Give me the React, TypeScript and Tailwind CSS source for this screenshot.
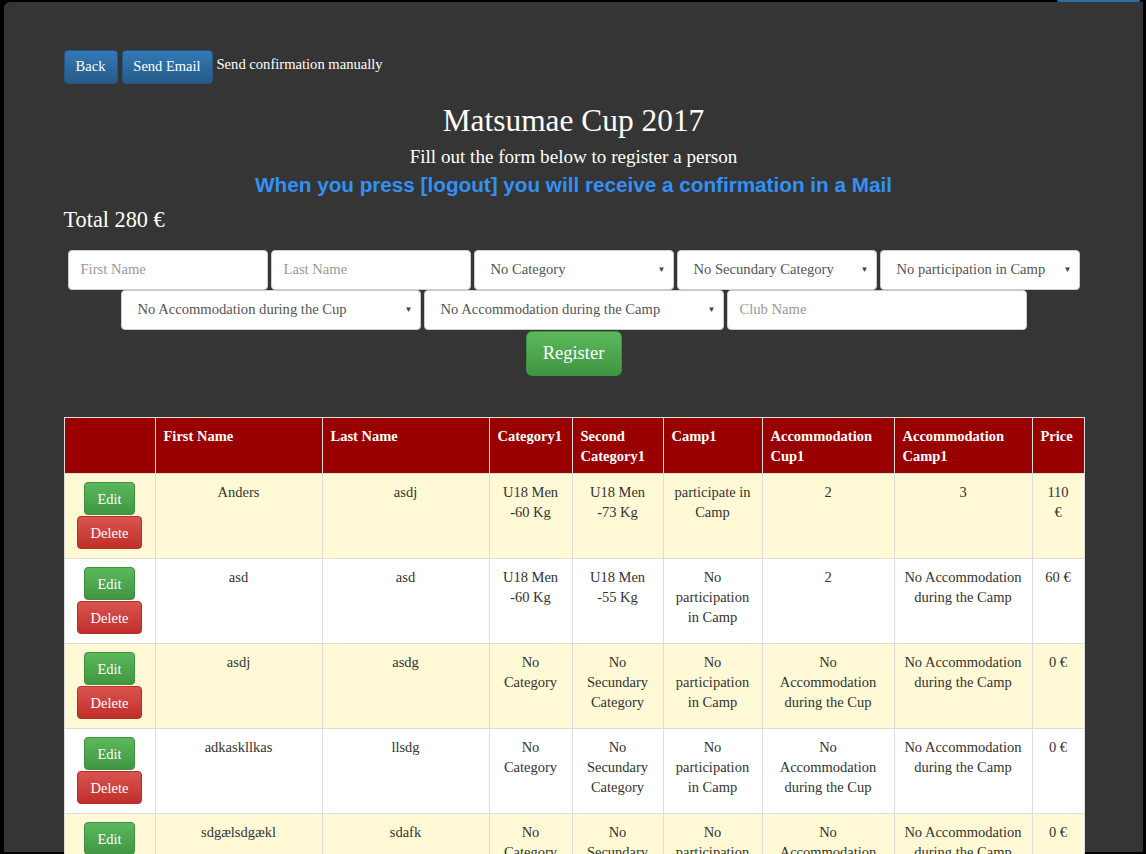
import React from "react";

const cols = [91, 167, 167, 83, 91, 99, 132, 138, 52];
const heads = ["", "First Name", "Last Name", "Category1", "Second Category1", "Camp1", "Accommodation Cup1", "Accommodation Camp1", "Price"];

const rows = [
  ["Anders", "asdj", "U18 Men -60 Kg", "U18 Men -73 Kg", "participate in Camp", "2", "3", "110 €"],
  ["asd", "asd", "U18 Men -60 Kg", "U18 Men -55 Kg", "No participation in Camp", "2", "No Accommodation during the Camp", "60 €"],
  ["asdj", "asdg", "No Category", "No Secundary Category", "No participation in Camp", "No Accommodation during the Cup", "No Accommodation during the Camp", "0 €"],
  ["adkaskllkas", "llsdg", "No Category", "No Secundary Category", "No participation in Camp", "No Accommodation during the Cup", "No Accommodation during the Camp", "0 €"],
  ["sdgælsdgækl", "sdafk", "No Category", "No Secundary Category", "No participation in Camp", "No Accommodation during the Cup", "No Accommodation during the Camp", "0 €"],
];

function TextInput({ placeholder, w }: { placeholder: string; w: string }) {
  return (
    <div className={`${w} h-[40px] bg-white rounded-[4px] border border-[#ccc] flex items-center pl-[12px] text-[14.6px] text-[#999]`}>
      {placeholder}
    </div>
  );
}

function Select({ label, w }: { label: string; w: string }) {
  return (
    <div className={`${w} h-[40px] bg-white rounded-[4px] border border-[#ccc] flex items-center justify-between pl-[16px] pr-[7px] text-[14.6px] text-[#555]`}>
      <span>{label}</span>
      <span className="text-[8px] text-[#444]">▼</span>
    </div>
  );
}

export default function App() {
  return (
    <div className="w-[1146px] h-[854px] bg-black overflow-hidden relative font-['Liberation_Serif',serif]">
      <div className="absolute right-[6px] top-0 w-[83px] h-[2px] bg-[#2e6da4] rounded-b-[2px]" />
      <div className="ml-[4px] mt-[2px] w-[1139px] h-[850px] bg-[#353535] rounded-tl-[6px] pt-[48px]">
        <div className="w-[1020px] mx-auto">
          {/* top buttons */}
          <div className="flex items-center gap-[4px]">
            <button className="h-[34px] w-[54px] rounded-[4px] text-white text-[14.5px] bg-gradient-to-b from-[#337ab7] to-[#265a88] border border-[#245580]">Back</button>
            <button className="h-[34px] w-[91px] rounded-[4px] text-white text-[14.5px] bg-gradient-to-b from-[#337ab7] to-[#265a88] border border-[#245580]">Send Email</button>
            <span className="text-white text-[14.6px] -mt-[4px]">Send confirmation manually</span>
          </div>

          <h1 className="mt-[17px] text-center text-white text-[31.4px] leading-[40px]">Matsumae Cup 2017</h1>
          <p className="mt-[4px] text-center text-white text-[19.1px] leading-[24px]">Fill out the form below to register a person</p>
          <p className="mt-[4px] text-center text-[#3391f5] text-[20.7px] leading-[24px] font-bold font-['Liberation_Sans',sans-serif]">
            When you press [logout] you will receive a confirmation in a Mail
          </p>
          <p className="mt-[8px] text-white text-[22.3px] leading-[30px]">Total 280 €</p>

          {/* form */}
          <div className="mt-[15px] flex justify-center gap-[3px]">
            <TextInput placeholder="First Name" w="w-[200px]" />
            <TextInput placeholder="Last Name" w="w-[200px]" />
            <Select label="No Category" w="w-[200px]" />
            <Select label="No Secundary Category" w="w-[200px]" />
            <Select label="No participation in Camp" w="w-[200px]" />
          </div>
          <div className="flex justify-center gap-[3px]">
            <Select label="No Accommodation during the Cup" w="w-[300px]" />
            <Select label="No Accommodation during the Camp" w="w-[300px]" />
            <TextInput placeholder="Club Name" w="w-[300px]" />
          </div>
          <div className="mt-[1px] flex justify-center">
            <button className="h-[45px] w-[96px] rounded-[6px] text-white text-[18.5px] bg-gradient-to-b from-[#5cb85c] to-[#419641] border border-[#3e8f3e]">Register</button>
          </div>

          {/* table */}
          <table className="mt-[41px] w-[1020px] table-fixed border-collapse bg-white text-[14.5px] leading-[20px] text-[#333]">
            <colgroup>
              {cols.map((c, i) => (
                <col key={i} style={{ width: c }} />
              ))}
            </colgroup>
            <thead>
              <tr className="bg-[#990000] text-white">
                {heads.map((h, i) => (
                  <th key={i} className="h-[56px] align-top text-left font-bold px-[8px] pt-[8px] border border-[#ddd]">
                    {h}
                  </th>
                ))}
              </tr>
            </thead>
            <tbody>
              {rows.map((r, ri) => (
                <tr key={ri} className={ri % 2 === 0 ? "bg-[#fff9d6]" : "bg-white"}>
                  <td className="h-[85px] align-top border border-[#ddd] pt-[8px]">
                    <div className="flex flex-col items-center gap-[1px]">
                      <button className="h-[33px] w-[51px] rounded-[4px] text-white text-[14.5px] bg-gradient-to-b from-[#5cb85c] to-[#419641] border border-[#3e8f3e]">Edit</button>
                      <button className="h-[33px] w-[65px] rounded-[4px] text-white text-[14.5px] bg-gradient-to-b from-[#d9534f] to-[#c12e2a] border border-[#b92c28]">Delete</button>
                    </div>
                  </td>
                  {r.map((c, ci) => (
                    <td key={ci} className="align-top text-center px-[8px] pt-[8px] border border-[#ddd]">
                      {ci === 7 ? <span className="inline-block max-w-[31px]">{c}</span> : c}
                    </td>
                  ))}
                </tr>
              ))}
            </tbody>
          </table>
        </div>
      </div>
    </div>
  );
}
